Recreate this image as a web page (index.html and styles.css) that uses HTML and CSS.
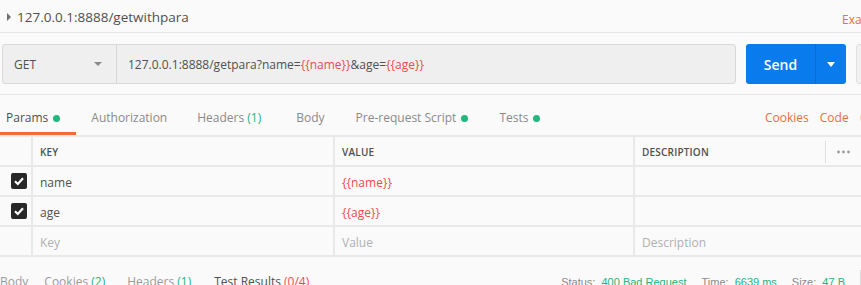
FILE: index.html
```html
<!DOCTYPE html>
<html lang="en">
<head>
    <meta charset="UTF-8">
    <title>getwithpara</title>
    <link rel="stylesheet" href="styles.css">
</head>
<body>
    <div class="app">
        <!-- Titolo richiesta -->
        <div class="req-title">
            <div class="title-left">
                <span class="caret-right"></span>
                <span class="title-text">127.0.0.1:8888/getwithpara</span>
            </div>
            <span class="link-orange">Examples (0)</span>
        </div>

        <!-- Barra URL -->
        <div class="url-bar">
            <div class="url-box">
                <div class="method">
                    <span>GET</span>
                    <span class="caret-down"></span>
                </div>
                <div class="url-input">127.0.0.1:8888/getpara?name=<span class="var">{{name}}</span>&amp;age=<span class="var">{{age}}</span></div>
            </div>
            <div class="send-group">
                <div class="send-btn">Send</div>
                <div class="send-more"><span class="caret-down white"></span></div>
            </div>
            <div class="save-btn">Save</div>
        </div>

        <!-- Schede -->
        <div class="tab-row">
            <div class="tabs">
                <div class="tab active">Params<span class="dot"></span></div>
                <div class="tab">Authorization</div>
                <div class="tab">Headers <span class="count">(1)</span></div>
                <div class="tab">Body</div>
                <div class="tab">Pre-request Script<span class="dot"></span></div>
                <div class="tab">Tests<span class="dot"></span></div>
            </div>
            <div class="aux-links">
                <span class="link-orange">Cookies</span>
                <span class="link-orange">Code</span>
                <span class="link-orange faded">Comments (0)</span>
            </div>
        </div>

        <!-- Tabella parametri -->
        <div class="params">
            <div class="cell"></div>
            <div class="cell head">KEY</div>
            <div class="cell head">VALUE</div>
            <div class="cell head">
                DESCRIPTION
                <span class="more">
                    <svg width="13" height="4" viewBox="0 0 13 4"><circle cx="1.5" cy="2" r="1.4" fill="#9a9a9a"/><circle cx="6.5" cy="2" r="1.4" fill="#9a9a9a"/><circle cx="11.5" cy="2" r="1.4" fill="#9a9a9a"/></svg>
                </span>
            </div>

            <div class="cell check-cell"><span class="check"><svg width="16" height="16" viewBox="0 0 16 16"><polyline points="4,8.3 6.8,11 12,5.3" fill="none" stroke="#fff" stroke-width="2.2"/></svg></span></div>
            <div class="cell">name</div>
            <div class="cell var">{{name}}</div>
            <div class="cell"></div>

            <div class="cell check-cell"><span class="check"><svg width="16" height="16" viewBox="0 0 16 16"><polyline points="4,8.3 6.8,11 12,5.3" fill="none" stroke="#fff" stroke-width="2.2"/></svg></span></div>
            <div class="cell">age</div>
            <div class="cell var">{{age}}</div>
            <div class="cell"></div>

            <div class="cell"></div>
            <div class="cell placeholder">Key</div>
            <div class="cell placeholder">Value</div>
            <div class="cell placeholder">Description</div>
        </div>

        <!-- Risposta -->
        <div class="response-bar">
            <div class="resp-tabs">
                <span class="first">Body</span>
                <span>Cookies <span class="count">(2)</span></span>
                <span>Headers <span class="count">(1)</span></span>
                <span class="current">Test Results <span class="fail">(0/4)</span></span>
            </div>
            <div class="status">
                <span>Status: <b>400 Bad Request</b></span>
                <span>Time: <b>6639 ms</b></span>
                <span>Size: <b>47 B</b></span>
            </div>
            <span class="status-sep"></span>
        </div>
    </div>
</body>
</html>
```

FILE: styles.css
```css
/* Base */
body {
    margin: 0;
    background-color: #fafafa;
    font-family: 'Open Sans', sans-serif;
    color: #505050;
    overflow: hidden;
}

.app {
    width: 861px;
    height: 285px;
    overflow: hidden;
    white-space: nowrap;
}

.link-orange {
    color: #f26b3a;
    font-size: 12px;
}

.var {
    color: #f24a4a;
}

.count {
    color: #26b47f;
}

/* Titolo */
.req-title {
    display: flex;
    align-items: center;
    height: 32px;
    border-bottom: 1px solid #e6e6e6;
    padding-left: 6px;
}

.title-left {
    display: flex;
    align-items: center;
    width: 836px;
    flex-shrink: 0;
}

.caret-right {
    width: 0;
    height: 0;
    border-top: 4px solid transparent;
    border-bottom: 4px solid transparent;
    border-left: 4px solid #6f6f6f;
    margin-right: 6px;
    margin-left: 1px;
    margin-top: 2px;
}

.title-text {
    font-size: 13.5px;
    color: #505050;
    padding-top: 2px;
}

.req-title .link-orange {
    padding-top: 6px;
}

/* Barra URL */
.url-bar {
    display: flex;
    padding: 11px 0 10px 2px;
    border-bottom: 1px solid #e6e6e6;
    gap: 10px;
}

.url-box {
    display: flex;
    width: 734px;
    height: 40px;
    box-sizing: border-box;
    border: 1px solid #d8d8d8;
    border-radius: 3px;
    background-color: #efefef;
    flex-shrink: 0;
}

.method {
    display: flex;
    align-items: center;
    justify-content: space-between;
    width: 114px;
    padding: 0 14px 0 11px;
    box-sizing: border-box;
    border-right: 1px solid #d8d8d8;
    font-size: 12px;
    color: #505050;
}

.caret-down {
    width: 0;
    height: 0;
    border-left: 4px solid transparent;
    border-right: 4px solid transparent;
    border-top: 4px solid #8a8a8a;
}

.caret-down.white {
    border-top-color: #fff;
    border-left-width: 4.5px;
    border-right-width: 4.5px;
    border-top-width: 5px;
}

.url-input {
    display: flex;
    align-items: center;
    padding-left: 11px;
    font-size: 12px;
    color: #505050;
}

.send-group {
    display: flex;
    height: 40px;
    flex-shrink: 0;
    border-radius: 3px;
    overflow: hidden;
    background-color: #097bed;
}

.send-btn {
    width: 69px;
    display: flex;
    align-items: center;
    justify-content: center;
    color: #fff;
    font-size: 14px;
    font-weight: 600;
    border-right: 1px solid #0a6cd2;
}

.send-more {
    width: 30px;
    display: flex;
    align-items: center;
    justify-content: center;
}

.save-btn {
    width: 80px;
    height: 40px;
    box-sizing: border-box;
    flex-shrink: 0;
    border: 1px solid #e0e0e0;
    border-radius: 3px;
    background-color: #f0f0f0;
    color: transparent;
}

/* Schede */
.tab-row {
    display: flex;
    height: 40px;
}

.tabs {
    display: flex;
    width: 765px;
    flex-shrink: 0;
}

.tab {
    height: 16px;
    line-height: 16px;
    padding: 15px 15px 6px;
    border-bottom: 3px solid transparent;
    font-size: 12px;
    color: #8a8a8a;
}

.tab:nth-child(3) {
    padding-right: 18px;
}

.tab:nth-child(4) {
    padding-left: 17px;
    padding-right: 16px;
}

.tab:nth-child(5) {
    padding-right: 16px;
}

.tab:first-child {
    padding-left: 6px;
    padding-right: 16px;
}

.tab.active {
    color: #505050;
    border-bottom-color: #f26b3a;
}

.dot {
    display: inline-block;
    width: 7px;
    height: 7px;
    border-radius: 50%;
    background-color: #26b47f;
    margin-left: 5px;
    vertical-align: 0;
}

.aux-links {
    display: flex;
    gap: 11px;
    padding-top: 15px;
    line-height: 16px;
}

.faded {
    opacity: 0.5;
}

/* Tabella parametri */
.params {
    display: grid;
    grid-template-columns: 31px 300px 298px 1fr;
    grid-auto-rows: 28px;
    gap: 2px;
    padding: 2px 0;
    background-color: #e9e9e9;
}

.cell {
    display: flex;
    align-items: center;
    padding: 2px 7px 0;
    background-color: #fafafa;
    font-size: 12px;
    color: #505050;
}

.cell.head {
    padding-top: 1px;
    font-size: 10px;
    font-weight: 600;
    color: #505050;
    letter-spacing: 0.2px;
}

.cell.var {
    color: #f24a4a;
}

.cell.placeholder {
    color: #b0b0b0;
}

.check-cell {
    justify-content: flex-end;
    padding: 0 4px 0 0;
}

.check {
    display: flex;
    width: 16px;
    height: 16px;
    border-radius: 2px;
    background-color: #282828;
}

.more {
    display: flex;
    align-items: center;
    height: 22px;
    margin-left: auto;
    margin-right: 4px;
    padding-left: 11px;
    border-left: 1px solid #e0e0e0;
}

/* Risposta */
.response-bar {
    display: flex;
    align-items: center;
    padding-top: 13px;
    line-height: 16px;
}

.resp-tabs {
    display: flex;
    gap: 22px;
    font-size: 12px;
    color: #9a9a9a;
}

.resp-tabs .first {
    margin-right: -6px;
}

.resp-tabs .current {
    color: #505050;
    margin-left: 1px;
}

.fail {
    color: #f24a4a;
}

.status {
    display: flex;
    gap: 15px;
    margin-left: auto;
    font-family: 'Liberation Sans', Arial, sans-serif;
    font-size: 11px;
    color: #8a8a8a;
}

.status b {
    font-weight: normal;
    color: #26b47f;
    margin-left: 3px;
}

.status-sep {
    width: 1px;
    height: 24px;
    margin: 0 0 0 15px;
    background-color: #dcdcdc;
}
```
